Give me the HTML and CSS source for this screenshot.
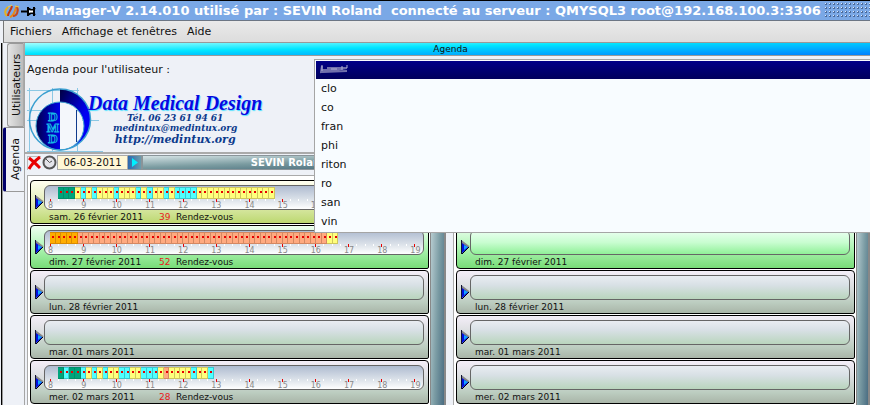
FILE: index.html
```html
<!DOCTYPE html>
<html lang="fr">
<head>
<meta charset="utf-8">
<title>Manager-V</title>
<link rel="stylesheet" href="styles.css">
</head>
<body>
<header class="titlebar">
  <svg class="app-icon" width="36" height="18" viewBox="0 0 36 18" fill="none" aria-hidden="true">
    <path d="M3 14C0 11 1 8 4 5" stroke="#e8b020" stroke-width="2"/>
    <path d="M4 14C4 10 7 9 8 4" stroke="#c33712" stroke-width="2"/>
    <path d="M6 15c4-1 4-5 7-11" stroke="#e88a18" stroke-width="2"/>
    <path d="M9 14c4 0 6-5 4-10" stroke="#c8481c" stroke-width="2"/>
    <path d="M4 5l4-2M11 4l4 1" stroke="#f6d13c"/>
    <path d="M17 9.500h8" stroke="#000" stroke-width="2"/>
    <path d="M24 5v9M24 6l3 2h2l2-2M24 13l3-2h2l2 2M30 5v9" stroke="#000" stroke-width="2"/>
    <path d="M25 9.500h4" stroke="#fff" stroke-width="2"/>
  </svg>
  <h1 class="title">Manager-V 2.14.010 utilisé par : SEVIN Roland&nbsp; connecté au serveur : QMYSQL3 root@192.168.100.3:3306</h1>
  <span class="grip"></span>
</header>
<nav class="menubar">
  <button class="menu">Fichiers</button>
  <button class="menu">Affichage et fenêtres</button>
  <button class="menu">Aide</button>
</nav>
<div class="workspace">
  <div class="tabs">
    <button class="tab">Utilisateurs</button>
    <button class="tab tab-active">Agenda</button>
  </div>
  <main class="main">
    <h2 class="panel-title">Agenda</h2>
    <div class="header">
      <p class="user-label" id="user-label">Agenda pour l'utilisateur :</p>
      <div class="brand">
        <svg class="logo" width="76" height="64" viewBox="0 0 76 64" aria-hidden="true">
          <defs>
            <linearGradient id="disc"><stop offset="0" stop-color="#000050"/><stop offset="1" stop-color="#0000e8"/></linearGradient>
            <linearGradient id="ring" x1="0" y1="0" x2="1" y2="1"><stop offset="0" stop-color="#000040"/><stop offset=".6" stop-color="#0000f0"/><stop offset="1" stop-color="#0000ff"/></linearGradient>
          </defs>
          <path d="M0 2.500h52M0 22.500h63M0 32.500h72M0 63.500h76M2.500 0v64M25.500 0v63M50.500 0v63" stroke="#8cc8e4" fill="none"/>
          <path d="M33 1a30.500 30.500 0 0 1 0 61A24 24 0 0 0 33 14Z" fill="url(#ring)"/>
          <path d="M33 14a24 24 0 0 0 0 48Z" fill="url(#disc)"/>
          <circle cx="33" cy="38" r="24" fill="none" stroke="#3a9fd0"/>
          <circle cx="33" cy="31.500" r="30.500" fill="none" stroke="#3a9fd0" stroke-width="1.500"/>
          <path d="M33 15a23 23 0 0 1 0 46Z" fill="#f4f7fb"/>
          <path d="M49.500 22v32" stroke="#103b8c"/>
          <g class="logo-letters"><text x="26" y="33">D</text><text x="26" y="44">M</text><text x="26" y="55">D</text></g>
        </svg>
        <address class="contact">
          <strong class="company">Data Medical Design</strong>
          <span class="small">Tél. 06 23 61 94 61</span>
          <span class="small">medintux@medintux.org</span>
          <span class="site">http://medintux.org</span>
        </address>
      </div>
      <ul class="user-list" role="listbox" aria-labelledby="user-label">
        <li class="user user-selected" role="option" aria-selected="true">
          <svg width="30" height="10" viewBox="0 0 30 10" fill="none" aria-hidden="true">
            <path d="M2 2l-1 6 26-4M2 6l25-2M3 8l24-1M7 4h18" stroke="#7070ac" stroke-width="2"/>
            <path d="M2 1v6M27 1v3M22 2v4M11 5h6" stroke="#b0b0d4"/>
          </svg>
        </li>
        <li class="user" role="option">clo</li>
        <li class="user" role="option">co</li>
        <li class="user" role="option">fran</li>
        <li class="user" role="option">phi</li>
        <li class="user" role="option">riton</li>
        <li class="user" role="option">ro</li>
        <li class="user" role="option">san</li>
        <li class="user" role="option">vin</li>
      </ul>
    </div>
    <div class="agendas">
      <section class="agenda">
        <div class="toolbar">
          <button class="tool" aria-label="Fermer">
            <svg width="14" height="14" viewBox="0 0 14 14"><path d="M0 .5h14M.5 0v14" stroke="#bbb"/><path d="M2 2c4 3 7 6 11 10M13 1C9 4 4 9 2 13" stroke="#e80000" stroke-width="3" fill="none"/></svg>
          </button>
          <button class="tool" aria-label="Heure">
            <svg width="15" height="15" viewBox="0 0 15 15"><circle cx="7.500" cy="7.500" r="6" fill="#e4e4ea" stroke="#555" stroke-width="2"/><path d="M4 4l3.500 3.500L10 6" stroke="#555" fill="none"/></svg>
          </button>
          <input class="date" aria-label="Date" value="06-03-2011">
          <button class="tool go" aria-label="Afficher">
            <svg width="13" height="13" viewBox="0 0 13 13"><path d="M4 2l6 4.500L4 11Z" fill="#00f0ff"/></svg>
          </button>
          <h3 class="owner">SEVIN Roland</h3>
        </div>
        <div class="days" data-agenda="left"></div>
      </section>
      <div class="splitter"></div>
      <section class="agenda agenda-second">
        <div class="toolbar"></div>
        <div class="days" data-agenda="right"></div>
      </section>
      <div class="splitter splitter-end"></div>
    </div>
  </main>
</div>
<script src="agenda.js"></script>
</body>
</html>
```
FILE: styles.css
```css
* { box-sizing: border-box; }
body {
  margin: 0;
  height: 100vh;
  overflow: hidden;
  display: flex;
  flex-direction: column;
  background: #eef1f7;
  color: #111;
  font: 11px/14px "DejaVu Sans", sans-serif;
}
h1, h2, h3, p, ul { margin: 0; padding: 0; font-weight: normal; }
button { font: inherit; color: inherit; border: 0; padding: 0; background: none; }
svg { display: block; flex: none; }

.titlebar {
  display: flex;
  align-items: center;
  height: 21px;
  flex: none;
  padding-left: 4px;
  border-top: 1px solid #000;
  border-bottom: 1px solid #6c7684;
  background: #7aa8e6;
  color: #fff;
}
.title { margin-left: 2px; font-size: 13px; font-weight: bold; line-height: 22px; white-space: nowrap; }
.grip {
  flex: 1;
  height: 16px;
  margin-left: 4px;
  background:
    repeating-conic-gradient(from 0deg at 1px 1px, transparent 0 75%, #dce8fa 0 100%) 0 0 / 4px 4px,
    repeating-conic-gradient(from 0deg at 2px 2px, transparent 0 75%, #4a6a9c 0 100%) 0 0 / 4px 4px;
}

.menubar {
  display: flex;
  flex: none;
  gap: 10px;
  height: 22px;
  margin-left: 3px;
  padding-left: 6px;
  border-left: 1px solid #777;
  border-bottom: 1px solid #999;
  background: linear-gradient(#eaeaea, #dcdcdc);
}
.menu { line-height: 22px; }

.workspace {
  display: flex;
  flex: 1;
  min-height: 0;
  margin-left: 1px;
  border-left: 1px solid #000;
}
.tabs {
  display: flex;
  flex-direction: column;
  align-items: flex-end;
  width: 23px;
  flex: none;
  border-left: 1px solid #999;
  border-right: 1px solid #a5a5a5;
}
.tab {
  width: 17px;
  height: 84px;
  writing-mode: vertical-rl;
  transform: rotate(180deg);
  line-height: 17px;
  border: 1px solid #999;
  border-left-color: #aaa;
  border-radius: 0 3px 3px 0;
  background: linear-gradient(90deg, #bbb, #e4e4e4);
}
.tab-active {
  width: 21px;
  height: 65px;
  border-right: 3px solid #00006c;
  border-left: 0;
  background: #eef1f7;
}

.main { display: flex; flex-direction: column; flex: 1; min-width: 0; }
.panel-title {
  height: 13px;
  flex: none;
  border-bottom: 1px solid #999;
  background: linear-gradient(179deg, #a0ffff 0, #00e6ff 40%, #00d0ff 50%, #00a0ff 80%, #0080ff);
  font-size: 9px;
  line-height: 12px;
  padding-left: 6px;
  text-align: center;
}
.header {
  position: relative;
  flex: none;
  height: 98px;
  border-bottom: 2px solid #aaa;
}
.user-label { padding: 7px 0 0 2px; }
.brand { display: flex; padding-left: 2px; margin-top: 11px; }
.logo { overflow: visible; }
.logo-letters text {
  font: bold 13px "Liberation Serif", serif;
  fill: #0000b0;
  stroke: #16b8e8;
  text-anchor: middle;
}
.contact {
  display: flex;
  flex-direction: column;
  align-items: center;
  margin-left: -15px;
  padding-top: 5px;
  font: italic bold 9px/10px "DejaVu Serif", serif;
  color: #0c3a8c;
}
.company {
  font: italic bold 20px/20px "Liberation Serif", serif;
  color: #0808e0;
  text-shadow: 1px 1px 1px #50e0ff;
}
.site { font-size: 11px; line-height: 14px; }

.user-list {
  position: absolute;
  z-index: 2;
  top: 3px;
  left: 289px;
  right: 0;
  padding: 1px 0 1px 1px;
  border: 1px solid #a5a5a5;
  border-right: 0;
  background: #f8fcff;
  list-style: none;
}
.user { height: 19px; padding-left: 5px; line-height: 19px; }
.user-selected { height: 18px; padding: 3px 4px; background: linear-gradient(#000088, #00005c); }

.agendas { display: flex; flex: 1; min-height: 0; }
.agenda { flex: 401 1 0; min-width: 0; padding-left: 2px; display: flex; flex-direction: column; }
.agenda-second { flex-basis: 5px; padding-left: 7px; }
.toolbar {
  display: flex;
  align-items: center;
  height: 17px;
  flex: none;
}
.tool { width: 15px; }
.date {
  width: 71px;
  height: 15px;
  padding: 0;
  border: 1px solid #aaa;
  background: #fff7d6;
  color: #111;
  font: 10px/13px "DejaVu Sans", sans-serif;
  text-align: center;
}
.go { width: 14px; height: 15px; border: 1px solid #8a9499; border-left: 0; background: linear-gradient(90deg, #2c68b0, #6c9cac); }
.owner {
  flex: 1;
  height: 15px;
  padding-left: 6px;
  border: 1px solid #8a9499;
  background: linear-gradient(178deg, #d5e3e5, #7b9ca1 50%, #416676);
  color: #fff;
  font-size: 10px;
  font-weight: bold;
  line-height: 14px;
  text-align: center;
}
.days {
  display: flex;
  flex-direction: column;
  gap: 1px;
  flex: 1;
  min-height: 0;
  overflow: hidden;
  margin-top: 4px;
  padding: 4px 1px 0 2px;
  border-top: 1px solid #aaa;
  border-left: 1px solid #aaa;
  background: #fff;
}
.splitter {
  flex: none;
  width: 16px;
  border: solid #888;
  border-width: 0 2px 0 1px;
  background: linear-gradient(92deg, #c8dadd, #7b9ca4 55%, #4a6d82);
}
.splitter-end { width: 14px; }

.day {
  display: flex;
  align-items: flex-start;
  flex: none;
  height: 44px;
  padding: 4px 4px 0 4px;
  border: 1px solid #000;
  border-radius: 4px 4px 2px 4px;
  background: linear-gradient(#f4eef8, #d9ddde 40%, #bccdc0 75%, #a9b5a8);
}
.day-saturday { background: linear-gradient(#fffff0, #e3edb8 50%, #bcd870); }
.day-sunday { background: linear-gradient(#effff2, #b0f5b5 50%, #78dc78); }
.arrow { margin-top: 10px; }
.day-body { flex: 1; min-width: 0; }
.strip {
  height: 25px;
  padding: 1px 7px 0 5px;
  border: 1px solid #666;
  border-radius: 6px;
  background: linear-gradient(#e9edf2, #d8e0e5 40%, #b9d5bd);
}
.day-sunday .strip { background: linear-gradient(#eafff0, #c8fdd0 50%, #90f098); }
.day .strip-busy { background: linear-gradient(#aebbd0, #dde3ea 60%, #fff); }
.events { display: grid; grid-template-columns: repeat(132, 1fr); height: 12px; }
.event {
  border: solid;
  border-width: 1px 1px 1px 0;
  background: linear-gradient(#e80000, #e80000) 2px 3px / 2px 2px no-repeat var(--fill);
}
.green { --fill: #00a47c; border-color: #008f69; }
.yellow { --fill: #ffff7c; border-color: #cfc75c; }
.cyan { --fill: #50ffff; border-color: #38c8d0; }
.orange { --fill: #ffad00; border-color: #da8a00; }
.salmon { --fill: #ffaa80; border-color: #d48862; }
.ticks { display: flex; justify-content: space-between; height: 3px; }
.tick { width: 1px; height: 2px; background: #fff; }
.tick-hour { height: 3px; background: #e80000; }
.hours { display: flex; justify-content: space-between; }
.hour {
  display: flex;
  justify-content: center;
  width: 1px;
  color: #8a8a8a;
  font-size: 8px;
  line-height: 7px;
}
.caption { display: flex; padding-left: 5px; font-size: 9px; line-height: 14px; white-space: nowrap; }
.caption-date { width: 110px; }
.count { width: 17px; color: #e8201c; }
```
FILE: agenda.js
```javascript
// Each slot lasts ten minutes; "start" counts five-minute steps from 8 h.
const COLORS = { g: "green", y: "yellow", c: "cyan", o: "orange", s: "salmon" };
const DAYS = [
  { date: "sam. 26 février 2011", kind: "day-saturday", start: 3, slots: "gggycycyyycyyycycyycycccc" + "y".repeat(14) },
  { date: "dim. 27 février 2011", kind: "day-sunday", start: 0, slots: "ooooo" + "s".repeat(45) + "yy" },
  { date: "lun. 28 février 2011", kind: "" },
  { date: "mar. 01 mars 2011", kind: "" },
  { date: "mer. 02 mars 2011", kind: "", start: 3, slots: "gcggcycycyyccyycccysyyyycyyc" }
];
const ARROW = `<svg class="arrow" width="9" height="15" viewBox="0 0 9 15" aria-hidden="true">
  <path d="M0 0l8 7-8 7Z" fill="#0010e0"/><path d="M0 1l8 6" stroke="#888" stroke-width="2"/>
  <path d="M8 7L1 14" stroke="#001"/><path d="M3 5l4 2-4 3Z" fill="#12a4ff"/><path d="M.5 0v14" stroke="#113" /></svg>`;

function timeline(day) {
  const events = [...day.slots].map((s, i) =>
    `<span class="event ${COLORS[s]}" style="grid-column:${day.start + 2 * i + 1} / span 2"></span>`).join("");
  let ticks = "", hours = "";
  for (let q = 0; q <= 44; q++) ticks += `<span class="tick${q % 4 ? "" : " tick-hour"}"></span>`;
  for (let h = 8; h <= 19; h++) hours += `<span class="hour">${h}</span>`;
  return `<div class="events">${events}</div><div class="ticks">${ticks}</div><div class="hours">${hours}</div>`;
}

function card(day, empty) {
  const busy = day.slots && !empty;
  return `<article class="day ${day.kind}">${ARROW}<div class="day-body">
    <div class="strip${busy ? " strip-busy" : ""}">${busy ? timeline(day) : ""}</div>
    <div class="caption"><span class="caption-date">${day.date}</span>${busy
      ? `<span class="count">${day.slots.length}</span><span>Rendez-vous</span>` : ""}</div>
  </div></article>`;
}

document.querySelectorAll(".days").forEach(el => {
  const empty = el.dataset.agenda === "right";
  el.innerHTML = DAYS.map(d => card(d, empty)).join("");
});
```
